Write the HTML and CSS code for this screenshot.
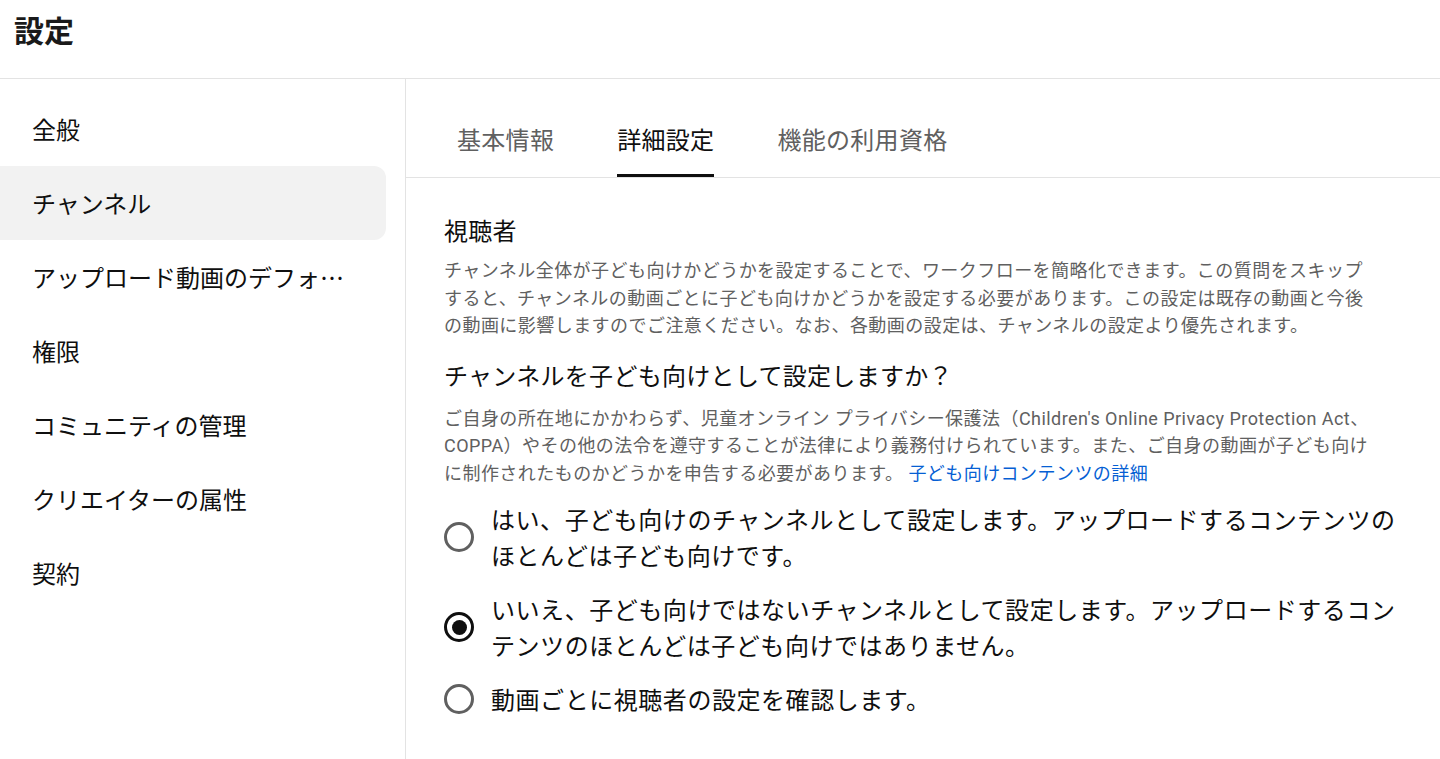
FILE: index.html
```html
<!DOCTYPE html>
<html lang="ja">
<head>
<meta charset="utf-8">
<title>設定</title>
<link rel="stylesheet" href="styles.css">
</head>
<body>
<header class="page-header">
  <h1 class="page-title">設定</h1>
</header>
<div class="layout">
  <nav class="sidebar">
    <div class="nav-item">全般</div>
    <div class="nav-item active">チャンネル</div>
    <div class="nav-item">アップロード動画のデフォルト設定</div>
    <div class="nav-item">権限</div>
    <div class="nav-item">コミュニティの管理</div>
    <div class="nav-item">クリエイターの属性</div>
    <div class="nav-item">契約</div>
  </nav>
  <main class="main">
    <div class="tabs">
      <div class="tab">基本情報</div>
      <div class="tab active">詳細設定</div>
      <div class="tab">機能の利用資格</div>
    </div>
    <section class="content">
      <h2 class="section-title">視聴者</h2>
      <p class="desc desc-1">チャンネル全体が子ども向けかどうかを設定することで、ワークフローを簡略化できます。この質問をスキップすると、チャンネルの動画ごとに子ども向けかどうかを設定する必要があります。この設定は既存の動画と今後の動画に影響しますのでご注意ください。なお、各動画の設定は、チャンネルの設定より優先されます。</p>
      <h3 class="question">チャンネルを子ども向けとして設定しますか？</h3>
      <p class="desc desc-2">ご自身の所在地にかかわらず、児童オンライン プライバシー保護法（Children's Online Privacy Protection Act、COPPA）やその他の法令を遵守することが法律により義務付けられています。また、ご自身の動画が子ども向けに制作されたものかどうかを申告する必要があります。 <a class="link" href="#">子ども向けコンテンツの詳細</a></p>
      <div class="options">
        <div class="option">
          <span class="radio"></span>
          <span class="option-text">はい、子ども向けのチャンネルとして設定します。アップロードするコンテンツのほとんどは子ども向けです。</span>
        </div>
        <div class="option">
          <span class="radio checked"></span>
          <span class="option-text">いいえ、子ども向けではないチャンネルとして設定します。アップロードするコンテンツのほとんどは子ども向けではありません。</span>
        </div>
        <div class="option">
          <span class="radio"></span>
          <span class="option-text">動画ごとに視聴者の設定を確認します。</span>
        </div>
      </div>
    </section>
  </main>
</div>
</body>
</html>
```
FILE: styles.css
```css
* { box-sizing: border-box; }
html, body {
  margin: 0;
  padding: 0;
  background: #ffffff;
}
body {
  font-family: Roboto, "Noto Sans CJK JP", "Noto Sans", sans-serif;
  color: #0f0f0f;
  overflow: hidden;
}
.page-header {
  height: 79px;
  border-bottom: 1px solid #e3e3e3;
  padding-left: 14px;
  display: flex;
  align-items: flex-start;
}
.page-title {
  margin: 0;
  margin-top: 10px;
  font-size: 30px;
  line-height: 38px;
  font-weight: 700;
  font-family: "Noto Sans CJK JP", sans-serif;
  color: #1a1a1a;
}
.layout {
  display: flex;
  height: calc(100vh - 79px);
}
.sidebar {
  width: 406px;
  flex: 0 0 406px;
  border-right: 1px solid #e3e3e3;
  padding-top: 13px;
  padding-right: 19px;
}
.nav-item {
  height: 74px;
  display: block;
  line-height: 74px;
  padding-left: 32px;
  padding-right: 42px;
  font-size: 24px;
  font-family: "Noto Sans CJK JP", sans-serif;
  color: #0f0f0f;
  white-space: nowrap;
  overflow: hidden;
  text-overflow: ellipsis;
}
.nav-item.active {
  background: #f2f2f2;
  border-radius: 0 12px 12px 0;
}
.main {
  flex: 1;
  min-width: 0;
}
.tabs {
  height: 99px;
  display: flex;
  align-items: flex-end;
  gap: 63px;
  padding-left: 51px;
  border-bottom: 1px solid #e3e3e3;
}
.tab {
  font-size: 24px;
  letter-spacing: 0.3px;
  line-height: 32px;
  padding-bottom: 19px;
  border-bottom: 3px solid transparent;
  color: #606060;
  font-family: "Noto Sans CJK JP", sans-serif;
}
.tab.active {
  color: #0f0f0f;
  border-bottom-color: #0f0f0f;
}
.content {
  padding: 36px 0 0 38px;
}
.section-title,
.question {
  margin: 0;
  font-size: 24px;
  letter-spacing: 0.3px;
  line-height: 32px;
  font-weight: 400;
  color: #0f0f0f;
  font-family: "Noto Sans CJK JP", sans-serif;
}
.question {
  margin-top: 19px;
}
.desc {
  margin: 0;
  width: 930px;
  font-size: 18px;
  letter-spacing: 0.45px;
  line-height: 27.5px;
  color: #606060;
}
.desc-1 { margin-top: 11px; }
.desc-2 { margin-top: 14px; }
.link {
  color: #065fd4;
  text-decoration: none;
}
.options {
  margin-top: 14px;
  display: flex;
  flex-direction: column;
  gap: 18px;
}
.option {
  display: flex;
  align-items: center;
  gap: 17px;
}
.radio {
  flex: 0 0 30px;
  width: 30px;
  height: 30px;
  border-radius: 50%;
  border: 3px solid #606060;
  display: flex;
  align-items: center;
  justify-content: center;
}
.radio.checked {
  border: 3.5px solid #0f0f0f;
}
.radio.checked::after {
  content: "";
  width: 15px;
  height: 15px;
  border-radius: 50%;
  background: #0f0f0f;
}
.option-text {
  width: 915px;
  font-size: 24px;
  letter-spacing: 0.55px;
  line-height: 36px;
  color: #0f0f0f;
  font-family: "Noto Sans CJK JP", sans-serif;
}
```
